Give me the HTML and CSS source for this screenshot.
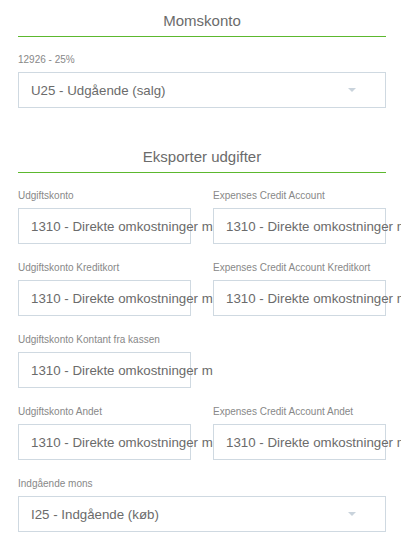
FILE: index.html
```html
<!DOCTYPE html>
<html lang="da">
<head>
    <meta charset="UTF-8">
    <meta name="viewport" content="width=device-width, initial-scale=1.0">
    <title>Momskonto</title>
    <link rel="stylesheet" href="styles.css">
</head>
<body>
    <div class="settings">
        <div class="section-title">Momskonto</div>

        <div class="field">
            <label class="field-label">12926 - 25%</label>
            <div class="select-box">
                <span class="value">U25 - Udgående (salg)</span>
                <span class="caret"></span>
            </div>
        </div>

        <div class="section-title spaced">Eksporter udgifter</div>

        <div class="field-row">
            <div class="field half">
                <label class="field-label">Udgiftskonto</label>
                <div class="input-box"><span class="value">1310 - Direkte omkostninger materialer</span></div>
            </div>
            <div class="field half">
                <label class="field-label">Expenses Credit Account</label>
                <div class="input-box"><span class="value">1310 - Direkte omkostninger materialer</span></div>
            </div>
        </div>

        <div class="field-row">
            <div class="field half">
                <label class="field-label">Udgiftskonto Kreditkort</label>
                <div class="input-box"><span class="value">1310 - Direkte omkostninger materialer</span></div>
            </div>
            <div class="field half">
                <label class="field-label">Expenses Credit Account Kreditkort</label>
                <div class="input-box"><span class="value">1310 - Direkte omkostninger materialer</span></div>
            </div>
        </div>

        <div class="field-row">
            <div class="field half">
                <label class="field-label">Udgiftskonto Kontant fra kassen</label>
                <div class="input-box"><span class="value">1310 - Direkte omkostninger materialer</span></div>
            </div>
        </div>

        <div class="field-row">
            <div class="field half">
                <label class="field-label">Udgiftskonto Andet</label>
                <div class="input-box"><span class="value">1310 - Direkte omkostninger materialer</span></div>
            </div>
            <div class="field half">
                <label class="field-label">Expenses Credit Account Andet</label>
                <div class="input-box"><span class="value">1310 - Direkte omkostninger materialer</span></div>
            </div>
        </div>

        <div class="field">
            <label class="field-label">Indgående mons</label>
            <div class="select-box">
                <span class="value">I25 - Indgående (køb)</span>
                <span class="caret"></span>
            </div>
        </div>
    </div>
</body>
</html>
```

FILE: styles.css
```css
html, body {
    margin: 0;
    padding: 0;
    background: #fff;
    overflow-x: hidden;
}

.settings {
    width: 368px;
    padding: 12px 0 0 18px;
    font-family: "Liberation Sans", Arial, sans-serif;
    color: #666;
}

.section-title {
    font-size: 15px;
    line-height: 18px;
    text-align: center;
    color: #6b6b6b;
    padding-bottom: 6px;
    border-bottom: 1px solid #5cb82e;
}

.section-title.spaced {
    margin-top: 40px;
}

.field {
    margin-top: 17px;
}

.field-row {
    display: grid;
    grid-template-columns: 195px 173px;
}

.field-row + .field-row .field,
.field-row + .field {
    margin-top: 18px;
}

/* left column clips its overflowing value at the gutter */
.field.half:first-child {
    padding-right: 22px;
    overflow: hidden;
}

.field-label {
    display: block;
    font-size: 10px;
    line-height: 12px;
    color: #888;
    margin-bottom: 6px;
    white-space: nowrap;
}

.select-box,
.input-box {
    box-sizing: border-box;
    height: 36px;
    border: 1px solid #cfd9e1;
    background: #fff;
    display: flex;
    align-items: center;
    padding-left: 12px;
}

.input-box {
    width: 173px;
}

.select-box {
    justify-content: space-between;
    padding-right: 29px;
}

.value {
    font-size: 13.3px;
    color: #6b6b6b;
    white-space: nowrap;
}

.caret {
    width: 0;
    height: 0;
    border-left: 4px solid transparent;
    border-right: 4px solid transparent;
    border-top: 4px solid #c9d3dc;
}
```
